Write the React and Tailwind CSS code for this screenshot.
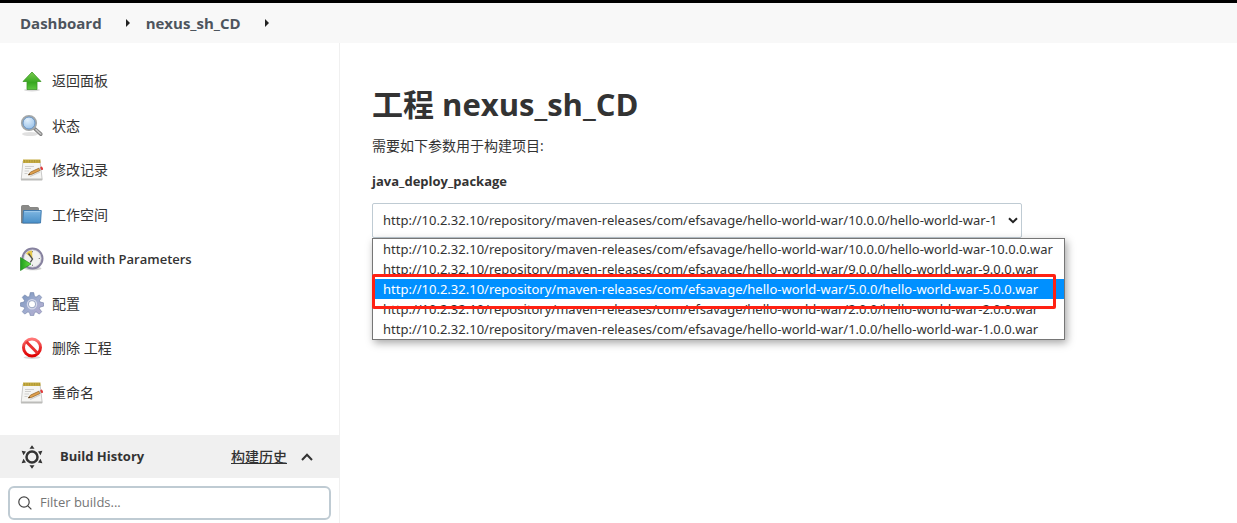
import React, { useState } from "react";

const BASE = "http://10.2.32.10/repository/maven-releases/com/efsavage/hello-world-war";
const PACKAGES = ["10.0.0", "9.0.0", "5.0.0", "2.0.0", "1.0.0"].map(
  (v) => `${BASE}/${v}/hello-world-war-${v}.war`
);

function UpArrow() {
  return (
    <svg viewBox="0 0 24 24" className="size-6 shrink-0" aria-hidden="true">
      <defs>
        <linearGradient id="up" x1="0" y1="0" x2="0" y2="1">
          <stop offset="0" stopColor="#7acb50" />
          <stop offset=".6" stopColor="#37a81f" />
          <stop offset="1" stopColor="#5cc63f" />
        </linearGradient>
      </defs>
      <ellipse cx="12" cy="21" rx="8" ry="1.4" fill="#000" opacity=".15" />
      <path d="M12 3 21 12.5H17V20.5H7V12.5H3Z" fill="url(#up)" stroke="#3c9826" strokeWidth=".8" strokeLinejoin="round" />
    </svg>
  );
}

function Magnifier() {
  return (
    <svg viewBox="0 0 24 24" className="size-6 shrink-0" aria-hidden="true">
      <defs>
        <radialGradient id="lens" cx=".4" cy=".3" r=".8">
          <stop offset="0" stopColor="#e2f0fc" />
          <stop offset="1" stopColor="#8bb8e4" />
        </radialGradient>
      </defs>
      <ellipse cx="10" cy="20" rx="8" ry="2" fill="#000" opacity=".12" />
      <path d="m14.500 14.500 6.300 5.700" stroke="#808080" strokeWidth="3.600" strokeLinecap="round" />
      <path d="m16 15.600 4.800 4.400" stroke="#c6c6c6" strokeWidth="1.600" strokeLinecap="round" />
      <circle cx="9" cy="9" r="7" fill="url(#lens)" stroke="#a5a8a8" strokeWidth="2.2" />
      <circle cx="9" cy="9" r="6" fill="none" stroke="#6393c8" strokeWidth=".9" />
    </svg>
  );
}

function Notepad() {
  return (
    <svg viewBox="0 0 24 24" className="size-6 shrink-0" aria-hidden="true">
      <path d="M3 3H20L22.2 21.500H1.200Z" fill="#f5f5f3" stroke="#bdbdbb" strokeWidth=".8" />
      <path d="M1.2 20.500H22.2V22.500H1Z" fill="#bcbcb9" />
      <rect x="3" y="1.5" width="17.5" height="3.5" fill="#c5ab42" />
      <path d="M4.5 2v2.5M7 2v2.5M9.500 2v2.500M12 2v2.500M14.500 2v2.500M17 2v2.500M19.400 2v2.500" stroke="#a08930" strokeWidth=".6" />
      <path d="M5 8.500H14M5 10.500H11M4.500 13H9M4.500 15.500H7.500" stroke="#cfcfcd" strokeWidth="1" />
      <path d="M10 18.500 20 14" stroke="#000" strokeWidth="1.200" opacity=".15" />
      <path d="m8.200 17 2.300-2.900 8.600-4 1.100 2.300-8.600 4Z" fill="#e0a04c" stroke="#8f642c" strokeWidth=".7" />
      <path d="m8.200 17 1.300-1.600.7 1.300Z" fill="#403020" />
      <path d="m19.700 9.800 1.100 2.300" stroke="#b9c0c6" strokeWidth="1.300" />
      <path d="m21.400 9.700.6 1.200" stroke="#e03a3a" strokeWidth="2.200" strokeLinecap="round" />
    </svg>
  );
}

function Folder() {
  return (
    <svg viewBox="0 0 24 24" className="size-6 shrink-0" aria-hidden="true">
      <defs>
        <linearGradient id="fold" x1="0" y1="0" x2="0" y2="1">
          <stop offset="0" stopColor="#7fb7e2" />
          <stop offset="1" stopColor="#4a90c8" />
        </linearGradient>
      </defs>
      <path d="M1.500 20V3.500Q1.500 2.500 2.500 2.500H8.500L10 4.500H17.500Q18.500 4.500 18.500 5.500V20Z" fill="#8a8a88" stroke="#777775" strokeWidth=".8" />
      <path d="M3.500 7.500H21.300L20.500 20H2.800Z" fill="url(#fold)" stroke="#3a76ab" strokeWidth=".9" strokeLinejoin="round" />
      <path d="M4.500 8.600H20.300" stroke="#a9d0ee" strokeWidth=".8" />
    </svg>
  );
}

function ClockPlay() {
  return (
    <svg viewBox="0 0 24 24" className="size-6 shrink-0" aria-hidden="true">
      <defs>
        <linearGradient id="play" x1="0" y1="0" x2="1" y2="0">
          <stop offset="0" stopColor="#1f9c1f" />
          <stop offset="1" stopColor="#67e03e" />
        </linearGradient>
      </defs>
      <ellipse cx="13" cy="21.500" rx="8.500" ry="1.800" fill="#000" opacity=".18" />
      <circle cx="12.500" cy="11.500" r="9.900" fill="#f1f1f0" stroke="#87829f" strokeWidth="2.200" />
      <circle cx="12.500" cy="11.500" r="8.600" fill="none" stroke="#c9c7d6" strokeWidth=".7" />
      <path d="M12.500 11.500 6 6.500Q8 3.800 12 3.600Z" fill="#e5c84c" />
      <path d="m8.500 6.500 4 5.500-2.200 3.400" fill="none" stroke="#4f4f4f" strokeWidth="1.300" />
      <path d="M12.500 4v1.300M20 11.500h-1.300M12.500 19v-1.300" stroke="#888" strokeWidth="1" />
      <path d="M.5 10.500V23.500L11 17Z" fill="url(#play)" stroke="#238a20" strokeWidth=".7" />
    </svg>
  );
}

function Gear() {
  return (
    <svg viewBox="0 0 24 24" className="size-6 shrink-0" aria-hidden="true">
      <defs>
        <linearGradient id="gear" x1="0" y1="0" x2="1" y2="1">
          <stop offset="0" stopColor="#7793bd" />
          <stop offset=".55" stopColor="#a3aed0" />
          <stop offset="1" stopColor="#b8a9cf" />
        </linearGradient>
      </defs>
      <path
        fill="url(#gear)"
        stroke="#6f7fa6"
        strokeWidth=".6"
        fillRule="evenodd"
        d="M10.300.6h3.400l.8 3.800 1.600.7 3.200-2.200 2.400 2.400-2.200 3.200.7 1.600 3.300.7v3.400l-3.400.8-.7 1.600 2.300 3.100-2.400 2.400-3.200-2.200-1.600.7-.8 3h-3.400l-.8-3-1.600-.7-3.200 2.200-2.400-2.400 2.300-3.100-.7-1.600-3.400-.8v-3.400l3.300-.7.7-1.600-2.200-3.200 2.400-2.400 3.200 2.200 1.600-.7ZM12 8.600a3.600 3.600 0 1 0 0 7.200 3.600 3.600 0 0 0 0-7.200Z"
      />
      <circle cx="12" cy="12.200" r="4.600" fill="none" stroke="#d5d9ea" strokeWidth="1.200" />
    </svg>
  );
}

function Forbidden() {
  return (
    <svg viewBox="0 0 24 24" className="size-6 shrink-0" aria-hidden="true">
      <defs>
        <linearGradient id="stop" x1="0" y1="0" x2="0" y2="1">
          <stop offset="0" stopColor="#f77" />
          <stop offset=".5" stopColor="#e93030" />
          <stop offset="1" stopColor="#e00000" />
        </linearGradient>
      </defs>
      <ellipse cx="12" cy="21.500" rx="8.500" ry="1.500" fill="#000" opacity=".15" />
      <circle cx="12" cy="11.500" r="8.500" fill="#fff" stroke="url(#stop)" strokeWidth="3" />
      <path d="m6.300 5.800 11.400 11.400" stroke="#e83030" strokeWidth="3" />
    </svg>
  );
}

function SunGear() {
  return (
    <svg viewBox="0 0 24 24" className="size-6 shrink-0" aria-hidden="true" fill="#333">
      <circle cx="12" cy="12" r="5.500" fill="none" stroke="#333" strokeWidth="2.500" />
      <path d="M9.500 3.700 12 .2l2.500 3.500ZM9.500 20.300 12 23.800l2.500-3.500Z" />
      <path d="M1.600 5.800 6 6.500 3.500 10.200ZM22.400 5.800 18 6.500 20.500 10.200ZM1.600 18.200 6 17.500 3.500 13.800ZM22.400 18.200 18 17.500 20.500 13.800Z" />
    </svg>
  );
}

const TASKS = [
  { label: "返回面板", Icon: UpArrow },
  { label: "状态", Icon: Magnifier },
  { label: "修改记录", Icon: Notepad },
  { label: "工作空间", Icon: Folder },
  { label: "Build with Parameters", Icon: ClockPlay, current: true },
  { label: "配置", Icon: Gear },
  { label: "删除 工程", Icon: Forbidden },
  { label: "重命名", Icon: Notepad },
];

function Crumb({ children }) {
  return (
    <li className="flex items-center">
      <a href="#" className="text-[15px] font-bold text-[#4d545d]">{children}</a>
      <svg viewBox="0 0 4 8" className="ml-6 mr-4 h-2 w-1" aria-hidden="true">
        <path d="M0 0 4 4 0 8Z" fill="#222" />
      </svg>
    </li>
  );
}

function Sidebar() {
  return (
    <aside className="flex w-[340px] shrink-0 flex-col border-r border-[#f0f0f0]">
      <nav className="pt-4">
        <ul className="grid h-[356px] grid-rows-8">
          {TASKS.map(({ label, Icon, current }) => (
            <li key={label} className="flex items-center">
              <a href="#" className={`flex items-center gap-2 pl-5 ${current ? "text-[13px] font-semibold" : "text-sm"}`}>
                <Icon />
                {label}
              </a>
            </li>
          ))}
        </ul>
      </nav>
      <section className="mt-5">
        <header className="flex h-[43px] items-center bg-[#f0f0f0] pl-5 pr-6">
          <SunGear />
          <h2 className="ml-4 flex-1 text-[13px] font-bold">Build History</h2>
          <a href="#" className="text-sm font-medium underline">构建历史</a>
          <button type="button" aria-label="Collapse" className="ml-3 flex size-4 items-center justify-center">
            <svg viewBox="0 0 12 8" className="h-2 w-3" aria-hidden="true">
              <path d="M1 7 6 1.800 11 7" fill="none" stroke="#333" strokeWidth="2" />
            </svg>
          </button>
        </header>
        <label className="m-2 flex h-[34px] items-center gap-2 rounded-md border-2 border-[#bfcbd3] px-2">
          <svg viewBox="0 0 14 14" className="size-[14px] shrink-0" aria-hidden="true" fill="none" stroke="#444" strokeWidth="1.200">
            <circle cx="6" cy="6" r="5.200" />
            <path d="m9.800 9.800 3.600 3.600" />
          </svg>
          <input type="search" aria-label="Filter builds" placeholder="Filter builds..." className="min-w-0 flex-1 bg-transparent text-[13px] outline-none placeholder:text-[#757575]" />
        </label>
      </section>
    </aside>
  );
}

function PackagePicker() {
  const [value, setValue] = useState(PACKAGES[0]);
  return (
    <div className="relative max-w-[650px] font-['Noto_Sans',sans-serif]">
      <select
        id="package"
        value={value}
        onChange={(e) => setValue(e.target.value)}
        className="block h-[35px] w-full appearance-none rounded-xs border border-[#bfcbd3] bg-white pl-[10px] pr-6 text-[13px] outline-none"
      >
        {PACKAGES.map((p) => (
          <option key={p}>{p}</option>
        ))}
      </select>
      <svg viewBox="0 0 10 7" className="pointer-events-none absolute right-1 top-[14px] h-[7px] w-[10px]" aria-hidden="true">
        <path d="M1 1.200 5 5.200 9 1.200" fill="none" stroke="#222" strokeWidth="2" />
      </svg>
      <ul role="listbox" aria-label="java_deploy_package" className="absolute left-0 top-[35px] w-[693px] border border-[#767676] bg-white text-[13px] leading-5 shadow-[2px_3px_8px_rgba(0,0,0,0.35)]">
        {PACKAGES.map((p, i) => (
          <li
            key={p}
            role="option"
            aria-selected={i === 2}
            className={`whitespace-nowrap pl-[10px] ${i === 2 ? "bg-[#0090ff] text-white" : ""}`}
          >
            {p}
          </li>
        ))}
      </ul>
      <div className="pointer-events-none absolute left-0 top-[71px] h-[35px] w-[684px] rounded-xs border-3 border-[#ff2113]" />
    </div>
  );
}

export default function App() {
  return (
    <div className="flex min-h-screen flex-col bg-white font-['Open_Sans','Noto_Sans_CJK_SC',sans-serif] text-[#333]">
      <header className="flex h-[43px] items-center border-t-3 border-black bg-[#f8f8f8] pl-5">
        <ol className="flex items-center">
          <Crumb>Dashboard</Crumb>
          <Crumb>nexus_sh_CD</Crumb>
        </ol>
      </header>
      <div className="flex flex-1">
        <Sidebar />
        <main className="min-w-0 flex-1 px-8 pt-10">
          <h1 className="text-[31px] font-bold leading-[42px]">工程 nexus_sh_CD</h1>
          <p className="mt-[11px] text-sm leading-5">需要如下参数用于构建项目:</p>
          <label htmlFor="package" className="mb-3 mt-[15px] block text-[13px] font-bold leading-5">java_deploy_package</label>
          <PackagePicker />
        </main>
      </div>
    </div>
  );
}
